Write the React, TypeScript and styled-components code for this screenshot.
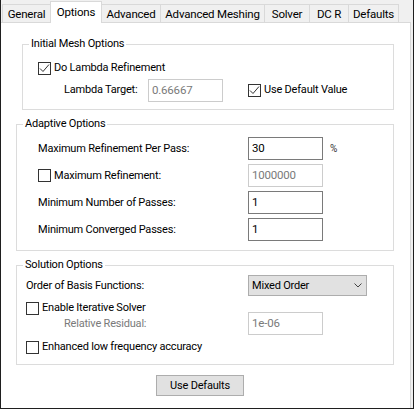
import styled, { createGlobalStyle } from 'styled-components'

const GlobalStyle = createGlobalStyle`
  html, body {
    margin: 0;
    padding: 0;
    background: #ffffff;
  }
  body {
    font-family: Roboto, "Liberation Sans", Arial, sans-serif;
    font-size: 11px;
    letter-spacing: -0.2px;
    color: #000000;
  }
`

const Frame = styled.div`
  width: 414px;
  height: 409px;
  box-sizing: border-box;
  border: 1px solid #1f1f1f;
  border-top: none;
  background: #f0f0f0;
  display: flex;
  flex-direction: column;
`

const TabStrip = styled.div`
  height: 22px;
  display: flex;
  align-items: flex-end;
  padding-left: 1px;
  flex-shrink: 0;
`

const Tab = styled.div<{ $width: number; $active?: boolean }>`
  box-sizing: border-box;
  width: ${({ $width }) => $width}px;
  height: ${({ $active }) => ($active ? 22 : 18)}px;
  margin-left: -1px;
  margin-bottom: ${({ $active }) => ($active ? -1 : 0)}px;
  padding-bottom: ${({ $active }) => ($active ? 2 : 0)}px;
  display: flex;
  align-items: center;
  justify-content: center;
  border: 1px solid #d9d9d9;
  border-bottom: none;
  background: ${({ $active }) => ($active ? '#ffffff' : '#f0f0f0')};
  position: relative;
  z-index: ${({ $active }) => ($active ? 2 : 0)};
  font-size: 11.5px;
  line-height: 16px;
  white-space: nowrap;

  &:first-child {
    margin-left: 0;
  }
`

const Panel = styled.div`
  flex: 1;
  margin-right: 2px;
  background: #ffffff;
  border-top: 1px solid #d9d9d9;
  border-right: 1px solid #d9d9d9;
  padding-top: 13px;
  display: flex;
  flex-direction: column;
  position: relative;
  z-index: 1;
`

const Group = styled.fieldset<{ $left: number; $width: number; $top?: number }>`
  box-sizing: border-box;
  margin: ${({ $top }) => $top ?? 0}px 0 0 ${({ $left }) => $left}px;
  width: ${({ $width }) => $width}px;
  padding: 0;
  min-width: 0;
  border: 1px solid #dcdcdc;
`

const Legend = styled.legend`
  margin-left: 6px;
  padding: 0 2px;
  line-height: 16px;
  height: 16px;
`

const Body = styled.div<{ $pad: string }>`
  padding: ${({ $pad }) => $pad};
  display: flex;
  flex-direction: column;
`

const Row = styled.div<{ $height: number; $top?: number; $indent?: number }>`
  display: flex;
  align-items: center;
  height: ${({ $height }) => $height}px;
  margin-top: ${({ $top }) => $top ?? 0}px;
  padding-left: ${({ $indent }) => $indent ?? 0}px;
  white-space: nowrap;
`

const Label = styled.span<{ $width?: number; $disabled?: boolean }>`
  width: ${({ $width }) => ($width ? `${$width}px` : 'auto')};
  flex-shrink: 0;
  color: ${({ $disabled }) => ($disabled ? '#7a7a7a' : '#000000')};
  line-height: 16px;
`

const CheckLabel = styled.label<{ $width?: number }>`
  display: flex;
  align-items: center;
  gap: 3px;
  width: ${({ $width }) => ($width ? `${$width}px` : 'auto')};
  flex-shrink: 0;
  line-height: 16px;
`

const Box = styled.span`
  box-sizing: border-box;
  width: 13px;
  height: 13px;
  border: 1px solid #333333;
  background: #ffffff;
  display: flex;
  align-items: center;
  justify-content: center;
  flex-shrink: 0;
`

const Field = styled.div<{ $disabled?: boolean; $width?: number }>`
  box-sizing: border-box;
  width: ${({ $width }) => $width ?? 75}px;
  height: 23px;
  border: 1px solid ${({ $disabled }) => ($disabled ? '#cccccc' : '#7a7a7a')};
  background: #ffffff;
  color: ${({ $disabled }) => ($disabled ? '#7a7a7a' : '#000000')};
  padding: 2px 0 0 3px;
  font-size: 11.5px;
  line-height: 16px;
  flex-shrink: 0;
`

const Unit = styled.span`
  margin-left: 7px;
  font-size: 10px;
  color: #333333;
`

const Select = styled.div`
  box-sizing: border-box;
  width: 119px;
  height: 21px;
  border: 1px solid #adadad;
  background: #e1e1e1;
  display: flex;
  align-items: center;
  justify-content: space-between;
  padding: 0 4px 0 3px;
  line-height: 16px;
`

const Footer = styled.div`
  margin-top: 10px;
  padding-left: 155px;
  display: flex;
`

const Button = styled.button`
  box-sizing: border-box;
  width: 88px;
  height: 21px;
  border: 1px solid #adadad;
  background: #e1e1e1;
  font: inherit;
  letter-spacing: inherit;
  color: #000000;
  line-height: 16px;
  padding: 0;
`

function CheckBox({ checked, label }: { checked?: boolean; label: string }) {
  return (
    <CheckLabel>
      <Box>
        {checked ? (
          <svg width="11" height="11" viewBox="0 0 11 11">
            <polyline points="1,5.5 4,8.5 10,1.5" fill="none" stroke="#333333" strokeWidth="1" />
          </svg>
        ) : null}
      </Box>
      {label}
    </CheckLabel>
  )
}

const tabs = [
  { name: 'General', width: 49 },
  { name: 'Options', width: 52, active: true },
  { name: 'Advanced', width: 60 },
  { name: 'Advanced Meshing', width: 105 },
  { name: 'Solver', width: 46 },
  { name: 'DC R', width: 40 },
  { name: 'Defaults', width: 51 },
]

export default function App() {
  return (
    <>
      <GlobalStyle />
      <Frame>
        <TabStrip>
          {tabs.map(({ name, width, active }) => (
            <Tab key={name} $width={width} $active={active}>
              {name}
            </Tab>
          ))}
        </TabStrip>
        <Panel>
          <Group $left={21} $width={372}>
            <Legend>Initial Mesh Options</Legend>
            <Body $pad="8px 0 8px 15px">
              <Row $height={16}>
                <CheckBox checked label="Do Lambda Refinement" />
              </Row>
              <Row $height={22} $top={3} $indent={26}>
                <Label $width={84}>Lambda Target:</Label>
                <Field $disabled>0.66667</Field>
                <span style={{ width: 25 }} />
                <CheckBox checked label="Use Default Value" />
              </Row>
            </Body>
          </Group>

          <Group $left={15} $width={378} $top={6}>
            <Legend>Adaptive Options</Legend>
            <Body $pad="5px 0 9px 21px">
              <Row $height={23}>
                <Label $width={210}>Maximum Refinement Per Pass:</Label>
                <Field>30</Field>
                <Unit>%</Unit>
              </Row>
              <Row $height={23} $top={4}>
                <CheckLabel $width={210}>
                  <Box />
                  Maximum Refinement:
                </CheckLabel>
                <Field $disabled>1000000</Field>
              </Row>
              <Row $height={23} $top={4}>
                <Label $width={210}>Minimum Number of Passes:</Label>
                <Field>1</Field>
              </Row>
              <Row $height={23} $top={4}>
                <Label $width={210}>Minimum Converged Passes:</Label>
                <Field>1</Field>
              </Row>
            </Body>
          </Group>

          <Group $left={15} $width={378} $top={6}>
            <Legend>Solution Options</Legend>
            <Body $pad="2px 0 9px 9px">
              <Row $height={21}>
                <Label $width={222}>Order of Basis Functions:</Label>
                <Select>
                  Mixed Order
                  <svg width="8" height="5" viewBox="0 0 8 5">
                    <polyline points="0.5,0.5 4,4 7.5,0.5" fill="none" stroke="#444444" strokeWidth="1" />
                  </svg>
                </Select>
              </Row>
              <Row $height={16} $top={4}>
                <CheckBox label="Enable Iterative Solver" />
              </Row>
              <Row $height={23} $top={-4} $indent={38}>
                <Label $width={184} $disabled>
                  Relative Residual:
                </Label>
                <Field $disabled>1e-06</Field>
              </Row>
              <Row $height={16} $top={4}>
                <CheckBox label="Enhanced low frequency accuracy" />
              </Row>
            </Body>
          </Group>

          <Footer>
            <Button>Use Defaults</Button>
          </Footer>
        </Panel>
      </Frame>
    </>
  )
}
